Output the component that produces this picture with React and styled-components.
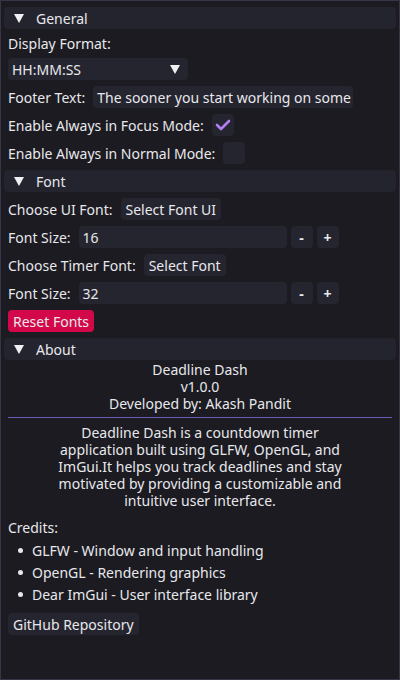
import styled, { createGlobalStyle } from 'styled-components';

const GlobalStyle = createGlobalStyle`
  html, body {
    margin: 0;
    padding: 0;
    background: #1b1b21;
  }
  * {
    box-sizing: border-box;
  }
`;

const Window = styled.div`
  width: 400px;
  height: 680px;
  border: 1px solid #3a3449;
  background: #1b1b21;
  padding: 6px 7px;
  display: flex;
  flex-direction: column;
  gap: 6px;
  font-family: 'Noto Sans', 'Open Sans', sans-serif;
  font-size: 14px;
  line-height: 17px;
  color: #e8e8ec;
  overflow: hidden;
`;

const HeaderBar = styled.div`
  height: 22px;
  margin: 0 -4px;
  padding: 0 10px;
  display: flex;
  align-items: center;
  gap: 12px;
  background: #24242e;
  border-radius: 4px;
`;

const Arrow = styled.span`
  width: 0;
  height: 0;
  border-left: 5px solid transparent;
  border-right: 5px solid transparent;
  border-top: 9px solid #f0f0f4;
`;

const Label = styled.div`
  height: 17px;
  white-space: nowrap;
  margin-top: ${p => p.$top || 0}px;
`;

const Row = styled.div`
  display: flex;
  align-items: center;
  gap: ${p => p.$gap || 8}px;
  height: 22px;
  white-space: nowrap;
`;

const Frame = styled.div`
  height: 22px;
  width: ${p => p.$w}px;
  background: #25252f;
  border-radius: 4px;
  padding: 0 4px;
  display: flex;
  align-items: center;
  justify-content: space-between;
  overflow: hidden;
  white-space: nowrap;
  flex-shrink: 0;
`;

const ComboArrow = styled(Arrow)`
  margin-right: 4px;
`;

const Check = styled.div`
  width: 22px;
  height: 22px;
  background: #25252f;
  border-radius: 4px;
  display: flex;
  align-items: center;
  justify-content: center;
`;

const Button = styled.div`
  height: 22px;
  padding: 0 ${p => (p.$square ? 0 : 5)}px;
  width: ${p => (p.$square ? '22px' : 'auto')};
  margin-top: ${p => p.$top || 0}px;
  background: ${p => (p.$danger ? '#d2084a' : '#25252f')};
  border-radius: 4px;
  display: inline-flex;
  align-items: center;
  justify-content: center;
  align-self: flex-start;
  white-space: nowrap;
  font-weight: ${p => (p.$square ? 700 : 400)};
`;

const Centered = styled.div`
  display: flex;
  flex-direction: column;
  align-items: center;
  margin-top: ${p => p.$top || 0}px;
`;

const Line = styled.div`
  height: 17px;
  white-space: nowrap;
`;

const Separator = styled.div`
  height: 1px;
  background: #6f5bb4;
  margin-top: -1px;
`;

const BulletList = styled.div`
  display: flex;
  flex-direction: column;
  margin-top: -3px;
`;

const BulletItem = styled.div`
  height: 22px;
  display: flex;
  align-items: center;
  padding-left: 10px;
  gap: 9px;
  &::before {
    content: '';
    width: 5px;
    height: 5px;
    border-radius: 50%;
    background: #e8e8ec;
  }
`;

function Header({ title }) {
  return (
    <HeaderBar>
      <Arrow />
      <span>{title}</span>
    </HeaderBar>
  );
}

function Tick() {
  return (
    <svg width="16" height="14" viewBox="0 0 16 14">
      <path d="M2 7 L6 11 L14 3" fill="none" stroke="#b07ef0" strokeWidth="2.6" strokeLinecap="round" strokeLinejoin="round" />
    </svg>
  );
}

function SizeRow({ value }) {
  return (
    <Row>
      <span>Font Size:</span>
      <Row $gap={4}>
        <Frame $w={208}>{value}</Frame>
        <Button $square>-</Button>
        <Button $square>+</Button>
      </Row>
    </Row>
  );
}

const info = ['Deadline Dash', 'v1.0.0', 'Developed by: Akash Pandit'];

const description = [
  'Deadline Dash is a countdown timer',
  'application built using GLFW, OpenGL, and',
  'ImGui.It helps you track deadlines and stay',
  'motivated by providing a customizable and',
  'intuitive user interface.',
];

const credits = [
  'GLFW - Window and input handling',
  'OpenGL - Rendering graphics',
  'Dear ImGui - User interface library',
];

export default function App() {
  return (
    <>
      <GlobalStyle />
      <Window>
        <Header title="General" />
        <Label>Display Format:</Label>
        <Frame $w={180}>
          <span>HH:MM:SS</span>
          <ComboArrow />
        </Frame>
        <Row>
          <span>Footer Text:</span>
          <Frame $w={260}>The sooner you start working on some</Frame>
        </Row>
        <Row>
          <span>Enable Always in Focus Mode:</span>
          <Check>
            <Tick />
          </Check>
        </Row>
        <Row>
          <span>Enable Always in Normal Mode:</span>
          <Check />
        </Row>
        <Header title="Font" />
        <Row>
          <span>Choose UI Font:</span>
          <Button>Select Font UI</Button>
        </Row>
        <SizeRow value="16" />
        <Row>
          <span>Choose Timer Font:</span>
          <Button>Select Font</Button>
        </Row>
        <SizeRow value="32" />
        <Button $danger>Reset Fonts</Button>
        <Header title="About" />
        <Centered $top={-5}>
          {info.map(t => (
            <Line key={t}>{t}</Line>
          ))}
        </Centered>
        <Separator />
        <Centered>
          {description.map(t => (
            <Line key={t}>{t}</Line>
          ))}
        </Centered>
        <Label $top={4}>Credits:</Label>
        <BulletList>
          {credits.map(t => (
            <BulletItem key={t}>{t}</BulletItem>
          ))}
        </BulletList>
        <Button $top={2}>GitHub Repository</Button>
      </Window>
    </>
  );
}
